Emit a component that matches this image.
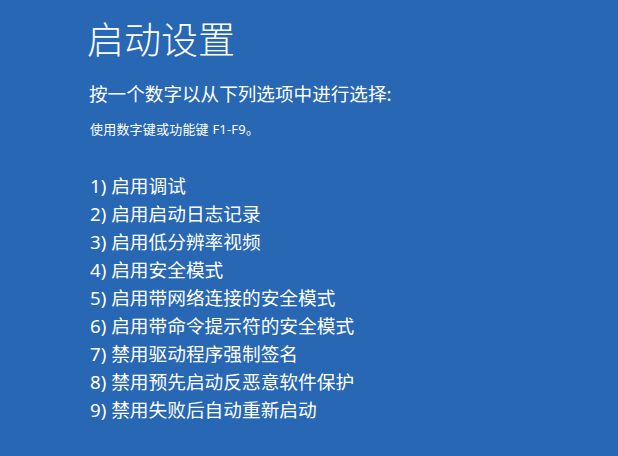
import React from "react";

const items = [
  "1) 启用调试",
  "2) 启用启动日志记录",
  "3) 启用低分辨率视频",
  "4) 启用安全模式",
  "5) 启用带网络连接的安全模式",
  "6) 启用带命令提示符的安全模式",
  "7) 禁用驱动程序强制签名",
  "8) 禁用预先启动反恶意软件保护",
  "9) 禁用失败后自动重新启动",
];

export default function App() {
  return (
    <div
      className="w-[618px] h-[456px] overflow-hidden bg-[#2767b3] text-white pl-[87px] pt-[16px]"
      style={{ fontFamily: '"Noto Sans", "Noto Sans CJK SC", sans-serif' }}
    >
      <h1 className="text-[37px] leading-[48px] font-light">启动设置</h1>
      <p className="mt-[16px] text-[18.6px] leading-[28px] pl-[2px]">按一个数字以从下列选项中进行选择:</p>
      <p className="mt-[11px] text-[13px] leading-[20px] pl-[3px] tracking-[0.2px]">使用数字键或功能键 F1-F9。</p>
      <ul className="mt-[33px] pl-[3px]">
        {items.map((t) => (
          <li key={t} className="text-[18.7px] leading-[28px]">
            {t}
          </li>
        ))}
      </ul>
    </div>
  );
}
